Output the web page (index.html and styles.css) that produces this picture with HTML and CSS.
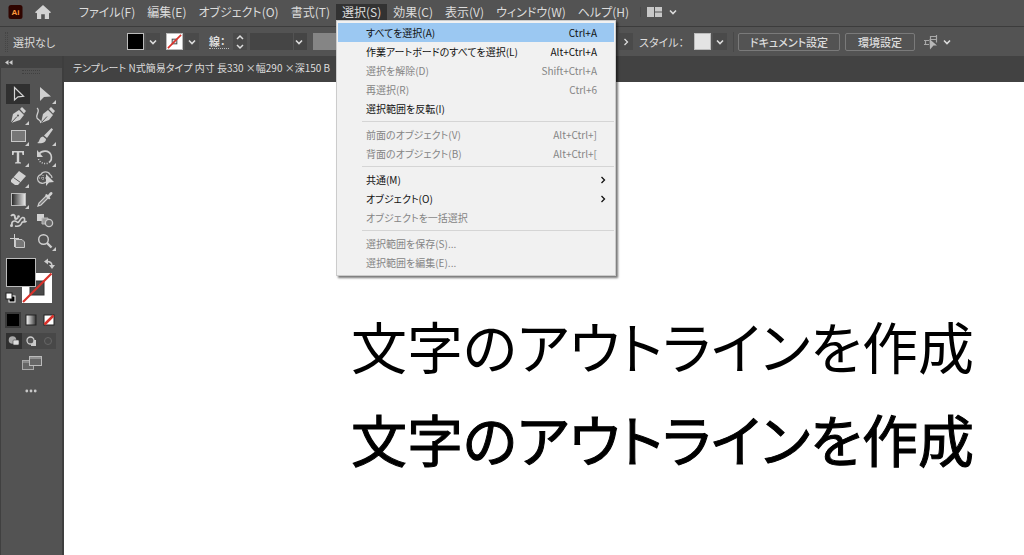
FILE: index.html
```html
<!DOCTYPE html>
<html lang="ja">
<head>
<meta charset="utf-8">
<title>テンプレート N式簡易タイプ</title>
<link rel="stylesheet" href="styles.css">
</head>
<body>
<svg class="defs" aria-hidden="true">
  <symbol id="chev" viewBox="0 0 10 10"><path d="M2 3.5L5 6.5L8 3.5" fill="none" stroke="currentColor" stroke-width="1.6"/></symbol>
  <symbol id="right" viewBox="0 0 10 10"><path d="M3.5 2L6.5 5L3.5 8" fill="none" stroke="currentColor" stroke-width="1.3"/></symbol>
</svg>
<header class="menubar">
  <svg class="logo" viewBox="0 0 14 14" aria-label="Ai"><rect width="14" height="14" rx="2.5" fill="#2f0500"/><text x="7" y="10" text-anchor="middle" class="logo-text">Ai</text></svg>
  <button class="home" aria-label="ホーム"><svg viewBox="0 0 16 14"><path d="M8 0L16 7.3L14.8 8.3L14 7.8V14H9.8V9.2H6.2V14H2V7.8L1.2 8.3L0 7.3Z" fill="#d2d2d2"/></svg></button>
  <nav class="menus">
    <button>ファイル(F)</button>
    <button>編集(E)</button>
    <button>オブジェクト(O)</button>
    <button>書式(T)</button>
    <div class="menu-holder">
      <button class="open" aria-expanded="true">選択(S)</button>
      <div class="dropdown" role="menu">
        <button class="item active" role="menuitem"><span>すべてを選択(A)</span><span>Ctrl+A</span></button>
        <button class="item" role="menuitem"><span>作業アートボードのすべてを選択(L)</span><span>Alt+Ctrl+A</span></button>
        <button class="item" role="menuitem" disabled><span>選択を解除(D)</span><span>Shift+Ctrl+A</span></button>
        <button class="item" role="menuitem" disabled><span>再選択(R)</span><span>Ctrl+6</span></button>
        <button class="item" role="menuitem"><span>選択範囲を反転(I)</span></button>
        <hr>
        <button class="item" role="menuitem" disabled><span>前面のオブジェクト(V)</span><span>Alt+Ctrl+]</span></button>
        <button class="item" role="menuitem" disabled><span>背面のオブジェクト(B)</span><span>Alt+Ctrl+[</span></button>
        <hr>
        <button class="item sub" role="menuitem"><span>共通(M)</span><svg class="ic10"><use href="#right"/></svg></button>
        <button class="item sub" role="menuitem"><span>オブジェクト(O)</span><svg class="ic10"><use href="#right"/></svg></button>
        <button class="item" role="menuitem" disabled><span>オブジェクトを一括選択</span></button>
        <hr>
        <button class="item" role="menuitem" disabled><span>選択範囲を保存(S)...</span></button>
        <button class="item" role="menuitem" disabled><span>選択範囲を編集(E)...</span></button>
      </div>
    </div>
    <button>効果(C)</button>
    <button>表示(V)</button>
    <button>ウィンドウ(W)</button>
    <button>ヘルプ(H)</button>
  </nav>
  <button class="workspace" aria-label="ワークスペース"><svg class="ws-icon" viewBox="0 0 15 10"><path d="M0 0H7V10H0ZM8 0H15V4.5H8ZM8 5.5H15V10H8Z" fill="#c8c8c8"/></svg><svg class="ic10"><use href="#chev"/></svg></button>
</header>

<section class="control" aria-label="コントロール">
  <span class="grip-v"></span>
  <span class="selection">選択なし</span>
  <button class="swatch-btn" aria-label="塗り"><span class="swatch black"></span><span class="drop"><svg class="ic10"><use href="#chev"/></svg></span></button>
  <button class="swatch-btn" aria-label="線のカラー"><svg class="swatch" viewBox="0 0 16 16"><rect width="16" height="16" fill="#fff"/><rect x="5.500" y="5.500" width="5" height="5" fill="#ddd" stroke="#444"/><path d="M1 15L15 1" stroke="#d9322b" stroke-width="1.800"/></svg><span class="drop"><svg class="ic10"><use href="#chev"/></svg></span></button>
  <label class="stroke-label" for="weight">線：</label>
  <button class="stepper" aria-label="線幅の増減"><svg viewBox="0 0 10 16"><path d="M2 5L5 2L8 5M2 11L5 14L8 11" fill="none" stroke="#ddd" stroke-width="1.500"/></svg></button>
  <span class="weight-box"><select id="weight"><option></option></select><svg class="ic10"><use href="#chev"/></svg></span>
  <span class="profile"></span>
  <button class="more" aria-label="詳細"><svg class="ic10"><use href="#right"/></svg></button>
  <span class="style-label">スタイル：</span>
  <button class="swatch-btn" aria-label="スタイル"><span class="swatch light"></span><span class="drop"><svg class="ic10"><use href="#chev"/></svg></span></button>
  <span class="rule"></span>
  <button class="outlined doc">ドキュメント設定</button>
  <button class="outlined pref">環境設定</button>
  <button class="snap" aria-label="ピクセルにスナップ"><svg class="snap-icon" viewBox="0 0 16 16"><path d="M1 6.500H6M1 10.500H6M2.500 6.500V10.500M7.500 6V2.500H14M7 5.500H14M13.500 1V8.500" fill="none" stroke="#a8a8a8" stroke-width="1.200"/><path d="M6.500 5L14 11.500H10.500L7 15.500Z" fill="#b8b8b8"/></svg><svg class="ic10"><use href="#chev"/></svg></button>
</section>

<main class="work">
  <aside class="tools">
    <div class="tools-head"><svg viewBox="0 0 8 5"><path d="M3.500 0V5L0 2.500ZM7.500 0V5L4 2.500Z" fill="#ccc"/></svg></div>
    <div class="grip-h"></div>
    <div class="tool-grid">
      <button class="selected" aria-label="選択"><svg viewBox="0 0 24 20"><path d="M8.500 3.500V16L12 12.800L17.500 12.300Z" fill="none" stroke="#d5d5d5" stroke-width="1.200"/></svg></button>
      <button class="fly" aria-label="ダイレクト選択"><svg viewBox="0 0 24 20"><path d="M7 3V17L11 13L18 12.500Z" fill="#cfcfcf"/></svg></button>
      <button class="fly" aria-label="ペン"><svg viewBox="0 0 24 20"><path d="M5 18L7 9L13 5L18 10L14 15Z" fill="#cfcfcf"/><path d="M14 4L16 2L20 6L18 8.500Z" fill="#cfcfcf"/><path d="M5 18L11 11.500" stroke="#535353"/><circle cx="12" cy="10.500" r="1" fill="#535353"/></svg></button>
      <button aria-label="曲線"><svg viewBox="0 0 24 20"><path d="M8 18L10 9L15 5L20 10L16 15Z" fill="#cfcfcf"/><path d="M16 4L18 2L22 6L20 8.500Z" fill="#cfcfcf"/><path d="M8 18L14 11.500" stroke="#535353"/><path d="M4 3C8 6 2 10 4 13C5 15 7 14 8 18" fill="none" stroke="#cfcfcf" stroke-width="1.300"/></svg></button>
      <button class="fly" aria-label="長方形"><svg viewBox="0 0 24 20"><rect x="5.500" y="4.500" width="14" height="11" fill="#777" stroke="#c8c8c8"/></svg></button>
      <button class="fly" aria-label="ブラシ"><svg viewBox="0 0 24 20"><path d="M18.500 2L20 3.500L14 12L11 9.500Z" fill="#cfcfcf"/><path d="M10 10.500L13 13C13 17 8 18 4 17C7 16 6 11 10 10.500Z" fill="#cfcfcf"/></svg></button>
      <button class="fly" aria-label="文字"><svg viewBox="0 0 24 20"><path d="M6 4H18V8H16.500L16 5.500H13.200V15L15 15.500V16.500H9V15.500L10.800 15V5.500H8L7.500 8H6Z" fill="#d2d2d2"/></svg></button>
      <button class="fly" aria-label="回転"><svg viewBox="0 0 24 20"><path d="M6 7C9 3 16 3 18 8C19 11 18 14 16 15.500" fill="none" stroke="#cfcfcf" stroke-width="1.600"/><path d="M4 3V10H10Z" fill="#cfcfcf"/><path d="M5.500 12C7 16 12 18 16 15.500" fill="none" stroke="#cfcfcf" stroke-width="1.500" stroke-dasharray="1 1.500"/></svg></button>
      <button class="fly" aria-label="消しゴム"><svg viewBox="0 0 24 20"><path d="M5 12L13 3L20 8L12 17H9L5 14Z" fill="#d2d2d2"/><path d="M7.500 9.500L14.500 14.500" stroke="#535353"/></svg></button>
      <button aria-label="シェイプ形成"><svg viewBox="0 0 24 20"><path d="M13 14A5 4.500 0 1 1 8 6.500A5 4.500 0 0 1 17 6.500A4.500 4 0 0 1 19 10" fill="none" stroke="#c8c8c8" stroke-width="1.300"/><path d="M6 10H14M10 7V13" stroke="#c8c8c8" stroke-dasharray="1 1"/><path d="M13 6V18L16 14.500L21 14Z" fill="#d2d2d2"/></svg></button>
      <button class="fly" aria-label="グラデーション"><svg viewBox="0 0 24 20"><defs><linearGradient id="g1"><stop stop-color="#222"/><stop offset="1" stop-color="#eee"/></linearGradient></defs><rect x="5.500" y="4.500" width="14" height="12" fill="url(#g1)" stroke="#bbb"/></svg></button>
      <button aria-label="スポイト"><svg viewBox="0 0 24 20"><path d="M5 17L6 14L13 7L15 9L8 16Z" fill="#777" stroke="#cfcfcf" stroke-width="1.200"/><path d="M12 6L13.500 5L15 6L17 3.500C18.500 2 20.500 4 19 5.500L16.500 8L17.500 9.500L16 10.500Z" fill="#d2d2d2"/></svg></button>
      <button aria-label="パペットワープ"><svg viewBox="0 0 24 20"><path d="M5 6C7 3.500 9 5 9 7.500C9 9.500 10.500 9.500 12 7.500" fill="none" stroke="#cfcfcf" stroke-width="2"/><path d="M6 15C5 11 9 10 11 12C13 14 14 8 16.500 7.500C19 7 19 10 18 11.500M9 16C13 17 15 15 16 12.500C17 11 19 13 20.500 11" fill="none" stroke="#cfcfcf" stroke-width="1.600"/><circle cx="5.500" cy="15.500" r="1.500" fill="#cfcfcf"/><circle cx="12.500" cy="6.500" r="1.300" fill="#cfcfcf"/></svg></button>
      <button aria-label="ブレンド"><svg viewBox="0 0 24 20"><rect x="4" y="4" width="7" height="7" fill="#d2d2d2"/><path d="M9 8H15V14H9Z" fill="#999" stroke="#bbb"/><circle cx="16" cy="13" r="3.600" fill="#666" stroke="#c8c8c8" stroke-width="1.300"/></svg></button>
      <button aria-label="アートボード"><svg viewBox="0 0 24 20"><path d="M4 7.500H13M8.500 3V16" stroke="#cfcfcf"/><path d="M9.500 8.500H16L18.500 11V16.500H9.500Z" fill="#777" stroke="#c8c8c8"/></svg></button>
      <button class="fly" aria-label="ズーム"><svg viewBox="0 0 24 20"><circle cx="10.500" cy="8.500" r="4.800" fill="none" stroke="#cfcfcf" stroke-width="1.400"/><path d="M14 12L18.500 16.500" stroke="#cfcfcf" stroke-width="2.400"/></svg></button>
    </div>
    <button class="paint" aria-label="塗りと線"><svg viewBox="0 0 50 48"><path d="M16 16H46V46H16Z" fill="#fff"/><rect x="24" y="24" width="14" height="14" fill="#4a4a4a" stroke="#333"/><path d="M17 45L45.500 16.500" stroke="#d9322b" stroke-width="2.200"/><rect x=".5" y="1.500" width="29" height="28" fill="#000" stroke="#bbb"/><path d="M41 4.500C45 4.500 46 6 46 9" fill="none" stroke="#ccc" stroke-width="1.500"/><path d="M42 1.500V7.500L38 4.500ZM43 8H49L46 12Z" fill="#ccc"/><rect x="3" y="39" width="6" height="6" fill="#000" stroke="#fff"/><rect x="0" y="36" width="6" height="6" fill="#fff" stroke="#222"/></svg></button>
    <div class="trio colors">
      <button aria-label="カラー"><svg viewBox="0 0 16 16"><rect width="16" height="16" fill="#3a3a3a"/><rect x="2" y="2" width="12" height="12" fill="#000"/></svg></button>
      <button aria-label="グラデーション塗り"><svg viewBox="0 0 16 16"><defs><linearGradient id="g2"><stop stop-color="#fff"/><stop offset="1" stop-color="#333"/></linearGradient></defs><rect x="3" y="3" width="10" height="10" fill="url(#g2)" stroke="#222"/></svg></button>
      <button aria-label="なし"><svg viewBox="0 0 16 16"><rect x="3" y="3" width="10" height="10" fill="#fff" stroke="#222"/><path d="M3.500 12.500L12.500 3.500" stroke="#d9322b" stroke-width="2.500"/></svg></button>
    </div>
    <div class="trio modes">
      <button class="selected" aria-label="標準描画"><svg viewBox="0 0 16 16"><circle cx="6.500" cy="7" r="3.800" fill="#aaa"/><rect x="7" y="7" width="6" height="5" rx="1" fill="#ddd" stroke="#444" stroke-width=".6"/></svg></button>
      <button aria-label="背面描画"><svg viewBox="0 0 16 16"><rect x="8" y="7" width="5" height="6" fill="#ccc"/><circle cx="7.500" cy="7.500" r="3.500" fill="#555" stroke="#ccc" stroke-width="1.300"/></svg></button>
      <button aria-label="内側描画" disabled><svg viewBox="0 0 16 16"><circle cx="8" cy="8" r="3.500" fill="#4a4a4a" stroke="#666"/></svg></button>
    </div>
    <button class="screen" aria-label="スクリーンモード"><svg viewBox="0 0 20 14"><rect x=".5" y="4.500" width="11" height="9" fill="#666" stroke="#aaa"/><path d="M.5 6H12" stroke="#aaa"/><rect x="7.500" y=".5" width="12" height="9" fill="#666" stroke="#bbb"/><path d="M7.500 2H20" stroke="#bbb"/></svg></button>
    <button class="dots" aria-label="ツールバーを編集"><svg viewBox="0 0 12 4"><circle cx="1.800" cy="2" r="1.400"/><circle cx="6" cy="2" r="1.400"/><circle cx="10.200" cy="2" r="1.400"/></svg></button>
  </aside>
  <section class="document">
    <div class="tab">テンプレート N式簡易タイプ 内寸 長330 ×幅290 ×深150 B</div>
    <div class="canvas">
      <p class="art">文字のアウトラインを作成</p>
      <p class="art heavier">文字のアウトラインを作成</p>
    </div>
  </section>
</main>
</body>
</html>
```
FILE: styles.css
```css
* { box-sizing: border-box; }
body {
  margin: 0;
  height: 100vh;
  display: flex;
  flex-direction: column;
  overflow: hidden;
  background: #535353;
  color: #dcdcdc;
  font: 12px/16px "Noto Sans CJK JP", sans-serif;
  font-feature-settings: "palt";
}
button {
  margin: 0;
  padding: 0;
  border: 0;
  background: none;
  color: inherit;
  font: inherit;
  font-feature-settings: inherit;
  white-space: nowrap;
}
svg { display: block; }
.defs { display: none; }
.ic10 { width: 10px; height: 10px; flex: none; }

.menubar {
  flex: none;
  display: flex;
  align-items: center;
  height: 27px;
  padding: 0 8px 2px;
  border-bottom: 1px solid #3c3c3c;
}
.logo { width: 15px; height: 14px; }
.logo-text { font: bold 8px "Liberation Sans", sans-serif; fill: #ff9a3c; }
.home { margin-left: 12px; }
.home svg { width: 16px; height: 14px; }
.menus { display: flex; margin-left: 22px; }
.menus > button, .open { padding: 0 6px; }
.menu-holder { position: relative; }
.open { background: #323232; }
.workspace {
  display: flex;
  align-items: center;
  gap: 6px;
  margin-left: 5px;
  padding-left: 6px;
  border-left: 1px solid #494949;
}
.ws-icon { width: 15px; height: 10px; }

.dropdown {
  position: absolute;
  z-index: 5;
  top: 100%;
  left: 0;
  width: 280px;
  padding: 2px 1px 3px;
  border: 1px solid #ccc;
  background: #f1f1f1;
  box-shadow: 2px 2px 2px #0008;
  color: #111;
  font-size: 10px;
}
.item {
  display: flex;
  justify-content: space-between;
  align-items: center;
  width: 100%;
  height: 19px;
  padding: 0 17px 0 28px;
}
.item.active { background: #9bc8f2; }
.item:disabled { color: #858585; }
.item.sub { padding-right: 6px; }
.dropdown hr {
  height: 1px;
  margin: 3px 0 3px 24px;
  border: 0;
  background: #d5d5d5;
}

.control {
  flex: none;
  display: flex;
  align-items: center;
  height: 29px;
  padding-left: 5px;
  font-size: 11px;
  white-space: nowrap;
}
.grip-v { width: 3px; height: 20px; border: dotted #454545; border-width: 0 1px; }
.selection { width: 119px; padding-left: 5px; }
.swatch-btn { display: flex; align-items: center; gap: 2px; margin-right: 6px; }
.swatch { width: 17px; height: 17px; border: 1px solid #bbb; }
.black { background: #000; }
.light { background: #e4e4e4; }
.drop, .more {
  display: flex;
  align-items: center;
  justify-content: center;
  width: 14px;
  height: 17px;
  background: #4a4a4a;
}
.stroke-label { width: 20px; margin-left: 4px; border-bottom: 1px dotted #bbb; font-weight: 700; line-height: 14px; }
.stepper { width: 14px; height: 17px; margin: 0 3px 0 4px; background: #4a4a4a; }
.stepper svg { width: 10px; height: 16px; margin: 0 auto; }
.weight-box { display: flex; align-items: center; width: 57px; height: 17px; padding-right: 3px; background: #454545; }
.weight-box select { flex: 1; min-width: 0; height: 17px; border: 0; border-right: 1px solid #535353; appearance: none; background: none; }
.profile { width: 296px; height: 17px; margin: 0 10px 0 6px; background: #858585; }
.more { margin-right: 6px; }
.style-label { width: 55px; }
.rule { width: 1px; height: 20px; margin-right: 4px; background: #484848; }
.outlined { height: 18px; margin-right: 5px; border: 1px solid #7a7a7a; border-radius: 2px; font-weight: 500; line-height: 14px; }
.doc { width: 102px; }
.pref { width: 70px; }
.snap { display: flex; align-items: center; gap: 3px; margin-left: 3px; }
.snap-icon { width: 16px; height: 16px; }

.work { flex: 1; display: flex; min-height: 0; }
.tools {
  flex: none;
  display: flex;
  flex-direction: column;
  align-items: flex-start;
  width: 64px;
  padding-left: 5px;
  border-right: 2px solid #3e3e3e;
  box-shadow: inset 1px 0 #404040;
}
.tools-head { align-self: stretch; height: 12px; margin-left: -5px; padding: 4px 5px; background: #424242; }
.tools-head svg { width: 8px; height: 5px; }
.grip-h { width: 18px; height: 4px; margin: 2px 0 10px 17px; border: dotted #404040; border-width: 1px 0; }
.tool-grid { display: grid; grid-template-columns: 24px 24px; gap: 1px 3px; margin-left: 1px; }
.tool-grid button { position: relative; height: 20px; }
.tool-grid svg { width: 24px; height: 20px; }
.selected { background: #303030; }
.fly::after {
  content: "";
  position: absolute;
  right: 1px;
  bottom: 0;
  border: 2px solid;
  border-color: transparent #ccc #ccc transparent;
}
.paint { margin: 6px 0 0 1px; }
.paint svg { width: 50px; height: 48px; overflow: visible; }
.trio { display: flex; gap: 2px; }
.trio svg { width: 16px; height: 16px; }
.colors { margin-top: 7px; }
.modes { gap: 1px; margin: 5px 0 0 1px; background: #484848; }
.screen { margin: 7px 0 0 17px; }
.screen svg { width: 20px; height: 14px; }
.dots { margin: 19px 0 0 20px; }
.dots svg { width: 12px; height: 4px; fill: #c8c8c8; }

.document { flex: 1; min-width: 0; display: flex; flex-direction: column; }
.tab { flex: none; height: 26px; padding-left: 9px; background: #424242; font-size: 10px; line-height: 24px; white-space: nowrap; }
.canvas { flex: 1; padding: 216px 0 0 287px; background: #fff; color: #000; }
.art { margin: 0; font-size: 56px; line-height: 93px; white-space: nowrap; }
.heavier { -webkit-text-stroke: 1px #000; }
```
